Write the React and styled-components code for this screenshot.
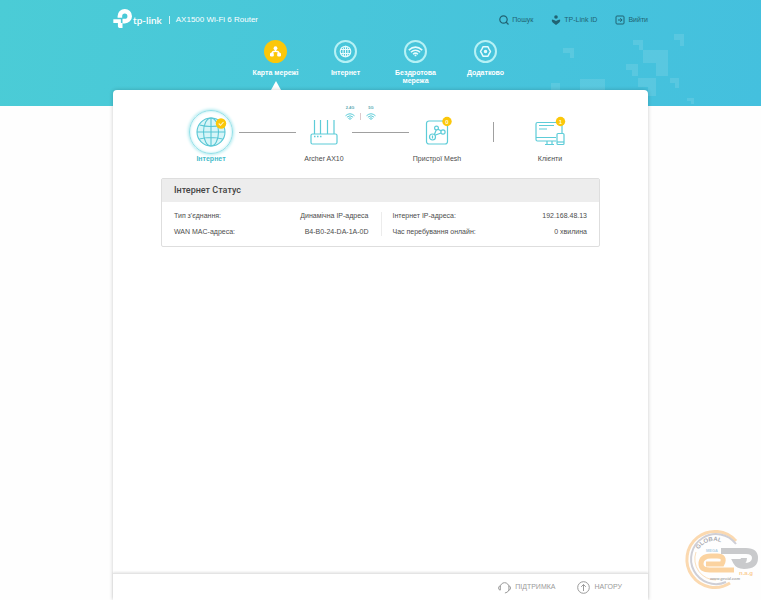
import React from 'react'
import styled, { createGlobalStyle } from 'styled-components'

const GlobalStyle = createGlobalStyle`
  * {
    box-sizing: border-box;
  }

  body {
    margin: 0;
    background-color: #fefefe;
    color: #4c4c4c;
    font-family: "Liberation Sans", Arial, Helvetica, sans-serif;
    font-size: 7px;
    line-height: 8px;
  }

  a {
    color: inherit;
    text-decoration: none;
  }

  svg {
    display: block;
    flex: none;
  }
`

const Page = styled.div`
  position: relative;
  display: flex;
  flex-direction: column;
  min-height: 100vh;
  padding: 0 113px;
  background: linear-gradient(100deg, #4bccd6 0%, #48c6da 45%, #44c0de 100%) no-repeat;
  background-size: 100% 106px;
`

const Pixels = styled.svg`
  position: absolute;
  top: 0;
  right: 0;
  fill: #fff;
  fill-opacity: 0.11;
`

const TopBar = styled.header`
  display: flex;
  align-items: center;
  height: 40px;
  color: #fff;
`

const Brand = styled.a`
  display: flex;
  align-items: center;
  gap: 1px;
  font-family: Lato, "Liberation Sans", sans-serif;
  font-size: 10px;
  font-weight: 600;
  line-height: 12px;

  svg {
    margin-top: -3px;
  }
`

const Model = styled.span`
  margin-left: 7px;
  padding-left: 6px;
  border-left: 1px solid #d5f3f7;
  font-size: 8px;
`

const Tools = styled.div`
  display: flex;
  gap: 18px;
  margin-left: auto;
`

const Tool = styled.button`
  display: flex;
  align-items: center;
  gap: 3px;
  padding: 0;
  border: 0;
  background: none;
  color: #216373;
  font: inherit;
  cursor: pointer;
`

const Nav = styled.nav`
  display: flex;
  justify-content: center;
  height: 50px;
`

const NavItem = styled.a`
  position: relative;
  display: flex;
  flex-direction: column;
  align-items: center;
  gap: 6px;
  width: 70px;
  padding: 0 10px;
  color: #fff;
  font-weight: 700;
  text-align: center;

  &[aria-current]::after {
    content: '';
    position: absolute;
    bottom: 0;
    border: 5px solid transparent;
    border-top-width: 0;
    border-bottom: 9px solid #fff;
  }
`

const NavIcon = styled.span`
  display: flex;
  align-items: center;
  justify-content: center;
  width: 23px;
  height: 23px;
  border: 2px solid ${props => (props.$active ? '#fbc70a' : '#b5f1f5')};
  border-radius: 50%;
  background-color: ${props => (props.$active ? '#fbc70a' : 'transparent')};
`

const NavLabel = styled.span`
  margin: 0 -6px;
`

const Panel = styled.main`
  position: relative;
  display: flex;
  flex: 1;
  flex-direction: column;
  border-radius: 4px 4px 0 0;
  background-color: #fff;
  box-shadow: 0 0 4px rgba(0, 0, 0, 0.2);
`

const Content = styled.div`
  flex: 1;
  padding: 18px 48px;
`

const NetworkMap = styled.div`
  display: flex;
  padding: 0 22px;
`

const MapItem = styled.a`
  position: relative;
  display: flex;
  flex-direction: column;
  align-items: center;
  width: 56px;
  color: ${props => (props.$active ? '#45bccb' : '#4c4c4c')};
  font-weight: ${props => (props.$active ? 700 : 400)};
  white-space: nowrap;
`

const MapIcon = styled.span`
  display: flex;
  align-items: center;
  justify-content: center;
  width: 47px;
  height: 47px;
`

const ActiveRing = styled.span`
  display: flex;
  align-items: center;
  justify-content: center;
  width: 44px;
  height: 44px;
  border: 1px solid #93e0e8;
  border-radius: 50%;
  box-shadow: 0 0 3px 1px #b4ebf0, inset 0 0 3px #b5ebf0;
`

const Connector = styled.span`
  flex: 1;
  height: 1px;
  margin-top: 24px;
  background-color: #a0a0a0;
`

const Split = styled.span`
  flex: 1;
  display: flex;
  justify-content: center;

  &::after {
    content: '';
    width: 1px;
    height: 20px;
    margin-top: 14px;
    background-color: #a0a0a0;
  }
`

const Bands = styled.span`
  position: absolute;
  top: -3px;
  left: 44px;
  display: flex;
  align-items: flex-end;
  color: #5aa9b3;
  font-size: 4px;
  font-weight: 700;
  line-height: 6px;
`

const Band = styled.span`
  display: flex;
  flex-direction: column;
  align-items: center;
  gap: 2px;
  width: 20px;
`

const BandSplit = styled.span`
  width: 1px;
  height: 7px;
  background-color: #dcc9cc;
`

const Card = styled.section`
  margin-top: 15px;
  border: 1px solid #dedede;
  border-radius: 2px;
  background-color: #fff;
`

const CardTitle = styled.h2`
  margin: 0;
  padding: 6px 12px;
  background-color: #ededed;
  color: #444;
  font-family: Roboto, "Liberation Sans", sans-serif;
  font-size: 9px;
  font-weight: 500;
  line-height: 11px;
`

const Details = styled.div`
  display: grid;
  grid-template-columns: 1fr 1fr;
  padding: 10px 0;
`

const Column = styled.dl`
  display: grid;
  gap: 8px;
  margin: 0;
  padding: 0 12px;

  & + & {
    padding-left: 11px;
    border-left: 1px solid #ececec;
  }
`

const Row = styled.div`
  display: flex;
  justify-content: space-between;

  dd {
    margin: 0;
  }
`

const Footer = styled.footer`
  display: flex;
  align-items: center;
  justify-content: flex-end;
  gap: 22px;
  height: 27px;
  padding: 0 26px;
  border-top: 1px solid #e4e4e4;
  box-shadow: 0 -1px 2px rgba(0, 0, 0, 0.1);
  color: #9b9b9b;
`

const FooterLink = styled.a`
  display: flex;
  align-items: center;
  gap: 4px;
`

const Watermark = styled.svg`
  position: absolute;
  right: 2px;
  bottom: 9px;
`

const LogoMark = () => (
  <svg width="19" height="19" viewBox="0 0 56 58" fill="#fff">
    <path d="M20 27V22a15 15 0 1 1 15 15h-7" fill="none" stroke="#fff" strokeWidth="14" />
    <path d="M0 31h23v12H0zM14 43h14v15h-9q-5 0-5-5z" />
  </svg>
)

const SearchIcon = () => (
  <svg width="10" height="10" viewBox="0 0 10 10" fill="none" stroke="currentColor" strokeWidth="1.2">
    <circle cx="4.5" cy="4.5" r="3.7" />
    <path d="M7 7l2.5 2.5" />
  </svg>
)

const CloudIcon = () => (
  <svg width="10" height="10" viewBox="0 0 10 10" fill="currentColor">
    <circle cx="5" cy="2" r="1.8" />
    <path d="M1 4.400q2 .1 4 1.700 2-1.600 4-1.700.8 1.600-.7 3L5 9.900 1.700 7.400Q.2 6 1 4.400z" />
  </svg>
)

const ExitIcon = () => (
  <svg width="10" height="10" viewBox="0 0 10 10" fill="none" stroke="currentColor">
    <path d="M1 3V2q0-1 1-1h6q1 0 1 1v6q0 1-1 1H2q-1 0-1-1V7M1 3v4M3 5h4M5.300 3.200L7.100 5 5.300 6.800" />
  </svg>
)

const MapNavIcon = () => (
  <svg width="13" height="13" viewBox="0 0 13 13" fill="#fff">
    <circle cx="6.5" cy="3.2" r="1.9" />
    <rect x="1" y="7.8" width="3.8" height="3.6" rx="1.2" />
    <rect x="8.2" y="7.8" width="3.8" height="3.6" rx="1.2" />
    <path d="M6.5 4v2.500M2.900 9q0-2.700 3.600-2.700T10.100 9" fill="none" stroke="#fff" strokeWidth="1.4" />
  </svg>
)

const GlobeNavIcon = () => (
  <svg width="13" height="13" viewBox="0 0 13 13" fill="none" stroke="#e6fbfd" strokeWidth="1.1">
    <circle cx="6.5" cy="6.5" r="5.3" />
    <ellipse cx="6.5" cy="6.5" rx="2.5" ry="5.3" />
    <path d="M6.5 1v11M1.800 4.500h9.400M1.800 8.500h9.400" />
  </svg>
)

const WifiIcon = ({ size, color }) => (
  <svg width={size} height={size * 0.7} viewBox="0 0 20 14" fill="none" stroke={color} strokeWidth="2">
    <path d="M1 5.500q9-8 18 0M3.800 8.300q6.200-5.500 12.400 0M6.700 11q3.300-3 6.600 0" />
    <circle cx="10" cy="12.5" r="1.3" fill={color} stroke="none" />
  </svg>
)

const GearNavIcon = () => (
  <svg width="13" height="13" viewBox="0 0 13 13" fill="none" stroke="#e6fbfd" strokeWidth="1.5">
    <path d="M4 1.800h5l1 2 1.500 2.700-1.500 2.700-1 2H4l-1-2-1.500-2.700L3 3.800z" strokeLinejoin="round" />
    <circle cx="6.5" cy="6.5" r="1" fill="#e6fbfd" />
  </svg>
)

const GlobeIcon = () => (
  <svg width="32" height="32" viewBox="0 0 32 32" fill="none" stroke="#57c6d4" strokeWidth="1.1">
    <circle cx="16" cy="16" r="14" fill="#d6f5f8" />
    <ellipse cx="16" cy="16" rx="7.5" ry="14" />
    <path d="M16 2v28M2 16h28M4.500 9q11.500 3 23 0M4.500 23q11.500-3 23 0" />
    <circle cx="26" cy="7.5" r="5.2" fill="#fbc70a" stroke="none" />
    <path d="M23.700 7.500l1.800 1.800 3-3.300" stroke="#fff6cf" />
  </svg>
)

const RouterIcon = () => (
  <svg width="28" height="26" viewBox="0 0 28 26" fill="none" stroke="#5dccd8" strokeWidth="1.2">
    <rect x="1" y="15" width="26" height="10" rx="1.5" />
    <path d="M4.500 1v14M10.500 1v14M17.500 1v14M24 1v14" />
    <path d="M4 17.500h1.500M7 17.500h1.500M10 17.500h1.500" strokeWidth="1.6" />
  </svg>
)

const CountBadge = ({ cx, cy, value }) => (
  <g stroke="none">
    <circle cx={cx} cy={cy} r="4.7" fill="#fbc70a" />
    <text x={cx} y={cy + 2} fill="#fff8dc" fontSize="6" fontWeight="700" textAnchor="middle">{value}</text>
  </g>
)

const MeshIcon = () => (
  <svg width="32" height="32" viewBox="0 0 32 32" fill="none" stroke="#5dccd8" strokeWidth="1.2">
    <rect x="5.5" y="5" width="21" height="23" rx="2.5" />
    <circle cx="11.5" cy="21" r="3" />
    <circle cx="15.5" cy="12" r="1.9" />
    <circle cx="22" cy="16" r="2.1" />
    <path d="M11.500 19.500v3M13.300 18.800l2-5M13.800 19.300l6.300-2.300M17 13.200l3.200 1.700" />
    <CountBadge cx={26} cy={5.5} value="0" />
  </svg>
)

const ClientsIcon = () => (
  <svg width="32" height="32" viewBox="0 0 32 32" fill="none" stroke="#5dccd8" strokeWidth="1.2">
    <path d="M22 25H3.500Q2 25 2 23.500V8q0-1.500 1.500-1.500h23Q28 6.500 28 8v9M2 21.500h20M5 9.500h15M5 13h8M13 25v3.500M18 25v3.500M11 28.500h9" />
    <rect x="23" y="17.5" width="7" height="11" rx="1" />
    <path d="M23 26h7" />
    <CountBadge cx={26.5} cy={5.5} value="1" />
  </svg>
)

const SupportIcon = () => (
  <svg width="13" height="13" viewBox="0 0 13 13" fill="none" stroke="currentColor">
    <path d="M2.300 9V6a4.300 4.300 0 0 1 8.600 0v3q-1 2.700-4 3" />
    <path d="M2.300 4.800Q.6 5 .6 7t1.700 2.200M10.800 4.800q1.700.2 1.700 2.200t-1.700 2.200" />
  </svg>
)

const UpIcon = () => (
  <svg width="13" height="13" viewBox="0 0 13 13" fill="none" stroke="currentColor">
    <circle cx="6.5" cy="6.5" r="5.8" />
    <path d="M6.500 10V3.500M4.200 5.800l2.300-2.300 2.300 2.300" />
  </svg>
)

const SiteLogo = () => (
  <Watermark width="76" height="64" viewBox="0 0 76 64" fill="none">
    <path d="M53 14A28 28 0 1 0 47 56" stroke="#fbd9b0" strokeWidth="3" />
    <path d="M53 17A25 25 0 1 0 43 55" stroke="#cfcfd6" strokeWidth="2" />
    <path d="M13 25A21 21 0 0 0 33 53" stroke="#fadfbd" strokeWidth="1" />
    <path id="arc" d="M15.700 22.500A18 18 0 0 1 46 22" />
    <text fill="#a9a9b0" fontSize="6" fontWeight="700">
      <textPath href="#arc">GLOBAL</textPath>
    </text>
    <text x="23" y="25" fill="#b3cfe4" fontSize="4" fontWeight="700">MEGA</text>
    <path d="M38 24h25q9 0 9 7 0 8-11 8-6 0-8-4h4q4 0 4-4" stroke="#c9cacc" strokeWidth="6" />
    <path d="M23 37h16q4-8-5-8h-6q-10 0-10 8 0 6 9 6h24" stroke="#fbd3a0" strokeWidth="5" />
    <text x="56" y="48" fill="#fbcf96" fontSize="6" fontWeight="700">n.a.g</text>
    <text x="27" y="53" fill="#aaa" fontSize="4" fontWeight="700" fontStyle="italic">www.gecid.com</text>
  </Watermark>
)

const navItems = [
  { label: 'Карта мережі', icon: <MapNavIcon />, active: true },
  { label: 'Інтернет', icon: <GlobeNavIcon /> },
  { label: 'Бездротова мережа', icon: <WifiIcon size={15} color="#e6fbfd" /> },
  { label: 'Додатково', icon: <GearNavIcon /> }
]

const details = [
  [
    ["Тип з'єднання:", 'Динамічна IP-адреса'],
    ['WAN MAC-адреса:', 'B4-B0-24-DA-1A-0D']
  ],
  [
    ['Інтернет IP-адреса:', '192.168.48.13'],
    ['Час перебування онлайн:', '0 хвилина']
  ]
]

const App = () => (
  <Page>
    <GlobalStyle />
    <Pixels width="220" height="106" viewBox="541 0 220 106">
      <path d="M563 48h11v10h-4v-5h-7zM633 40h10v10h-4v-5h-6zM674 34h10v12h-4v-6h-6zM643 50h25v26h-12V63h-13zM626 64h12v12h-6v-6h-6zM638 78h18v18h-8v-9h-10zM670 78h9v10h-4v-5h-5zM580 79h25v12h-25zM551 83h9v8h-9zM687 98h7v6h-3v-3h-4z" />
    </Pixels>
    <TopBar>
      <Brand href="#">
        <LogoMark />
        tp-link
      </Brand>
      <Model>AX1500 Wi-Fi 6 Router</Model>
      <Tools>
        <Tool><SearchIcon />Пошук</Tool>
        <Tool><CloudIcon />TP-Link ID</Tool>
        <Tool><ExitIcon />Вийти</Tool>
      </Tools>
    </TopBar>
    <Nav>
      {navItems.map(item => (
        <NavItem key={item.label} href="#" aria-current={item.active ? 'page' : undefined}>
          <NavIcon $active={item.active}>{item.icon}</NavIcon>
          <NavLabel>{item.label}</NavLabel>
        </NavItem>
      ))}
    </Nav>
    <Panel>
      <Content>
        <NetworkMap>
          <MapItem href="#" $active>
            <MapIcon><ActiveRing><GlobeIcon /></ActiveRing></MapIcon>
            Інтернет
          </MapItem>
          <Connector />
          <MapItem href="#">
            <MapIcon><RouterIcon /></MapIcon>
            Archer AX10
            <Bands>
              <Band>2.4G<WifiIcon size={10} color="#5dccd8" /></Band>
              <BandSplit />
              <Band>5G<WifiIcon size={10} color="#5dccd8" /></Band>
            </Bands>
          </MapItem>
          <Connector />
          <MapItem href="#">
            <MapIcon><MeshIcon /></MapIcon>
            Пристрої Mesh
          </MapItem>
          <Split />
          <MapItem href="#">
            <MapIcon><ClientsIcon /></MapIcon>
            Клієнти
          </MapItem>
        </NetworkMap>
        <Card>
          <CardTitle>Інтернет Статус</CardTitle>
          <Details>
            {details.map((rows, i) => (
              <Column key={i}>
                {rows.map(([name, value]) => (
                  <Row key={name}>
                    <dt>{name}</dt>
                    <dd>{value}</dd>
                  </Row>
                ))}
              </Column>
            ))}
          </Details>
        </Card>
      </Content>
      <Footer>
        <FooterLink href="#"><SupportIcon />ПІДТРИМКА</FooterLink>
        <FooterLink href="#"><UpIcon />НАГОРУ</FooterLink>
      </Footer>
    </Panel>
    <SiteLogo />
  </Page>
)

export default App
